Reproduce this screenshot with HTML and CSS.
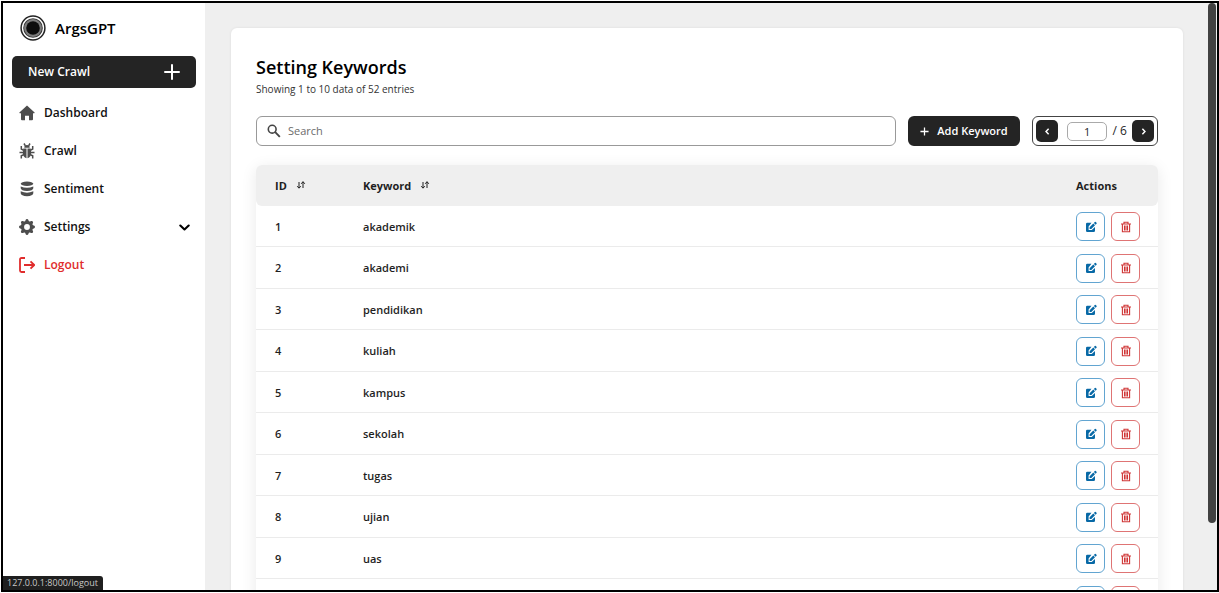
FILE: index.html
```
<!DOCTYPE html>
<html lang="en">
<head>
<meta charset="utf-8">
<meta name="viewport" content="width=device-width, initial-scale=1">
<title>ArgsGPT - Setting Keywords</title>
<link rel="stylesheet" href="styles.css">
</head>
<body>
<svg class="sprite" aria-hidden="true">
  <symbol id="sort" viewBox="0 0 10 10"><path d="M3 2v6M1.200 6.200 3 8.200l1.800-2M7 8V1.800M5.200 3.800 7 1.700l1.800 2.100" fill="none" stroke="currentColor" stroke-width="1"/></symbol>
  <symbol id="edit" viewBox="0 0 12 12"><path d="M6.500 1.800H2.300A1.300 1.300 0 0 0 1 3.100v6.600A1.300 1.300 0 0 0 2.300 11h6.400A1.300 1.300 0 0 0 10 9.700V6L6.800 9H3.600V5.600z" fill="currentColor"/><path d="M4.600 8V6.300L8.300 2.600 10 4.300 6.300 8zM8.900 2l.9-.9a.7.7 0 0 1 1 0l.7.7a.7.7 0 0 1 0 1l-.9.9z" fill="currentColor"/></symbol>
  <symbol id="trash" viewBox="0 0 12 12"><path d="M1 3h10M4 2.800V1.200h4v1.600M2.400 3.200v7.600h7.200V3.200M4.500 4.600v4.800M6 4.600v4.800M7.500 4.600v4.800" fill="none" stroke="currentColor" stroke-width="1.100"/></symbol>
</svg>
<div class="screen">
  <aside class="sidebar">
    <div class="brand">
      <svg class="logo" viewBox="0 0 26 26" aria-hidden="true"><circle cx="13" cy="13" r="11.900" fill="#fff" stroke="#222" stroke-width="1.500"/><circle cx="13" cy="13" r="9.800" fill="#333"/><circle cx="13" cy="13" r="8.900" fill="#7c7c7c"/><circle cx="13" cy="13" r="6.800" fill="#0d0d0d"/></svg>
      <span>ArgsGPT</span>
    </div>
    <button class="new-crawl" type="button">New Crawl
      <svg class="plus" viewBox="0 0 16 16" aria-hidden="true"><path d="M8 1v14M1 8h14" fill="none" stroke="currentColor" stroke-width="2" stroke-linecap="round"/></svg>
    </button>
    <nav class="menu">
      <a href="#dashboard"><svg viewBox="0 0 16 16" aria-hidden="true"><path d="M8 .6.400 7.500q-.4.700.5.800H2v6q0 1 1 1h3v-4.600h4v4.600h3q1 0 1-1v-6h1.100q.9-.1.500-.8z" fill="currentColor"/></svg>Dashboard</a>
      <a href="#crawl"><svg viewBox="0 0 16 16" aria-hidden="true"><path d="M5.300 4.800a2.700 2.700 0 0 1 5.400 0zM4.300 5.500h3.200v9.700Q3.800 14 3.800 10zM8.500 5.500h3.200l.5 4.500q0 4-3.700 5.200z" fill="currentColor"/><path d="M6.400 2.800 5 .5M9.600 2.800 11 .5M4.600 7.300 2.300 6V3M11.400 7.300 13.700 6V3M4.200 9.600H.5M11.800 9.600h3.700M4.600 11.700l-2.300 1V15.500M11.400 11.700l2.300 1V15.500" fill="none" stroke="currentColor" stroke-width="1.500"/></svg>Crawl</a>
      <a href="#sentiment"><svg viewBox="0 0 16 16" aria-hidden="true"><ellipse cx="8" cy="2.800" rx="6.300" ry="2.200" fill="currentColor"/><path d="M1.700 5.400Q8 8.200 14.300 5.400v1.800Q14 9.700 8 9.900 2 9.700 1.700 7.200zM1.700 10.300Q8 13.100 14.300 10.300v2Q14 15 8 15.200 2 15 1.700 12.300z" fill="currentColor"/></svg>Sentiment</a>
      <a href="#settings"><svg viewBox="0 0 16 16" aria-hidden="true"><path fill="currentColor" d="M9.405 1.050c-.413-1.400-2.397-1.400-2.810 0l-.1.340a1.464 1.464 0 0 1-2.105.872l-.310-.170c-1.283-.698-2.686.705-1.987 1.987l.169.311c.446.820.023 1.841-.872 2.105l-.340.100c-1.400.413-1.400 2.397 0 2.810l.340.100a1.464 1.464 0 0 1 .872 2.105l-.170.310c-.698 1.283.705 2.686 1.987 1.987l.311-.169a1.464 1.464 0 0 1 2.105.872l.100.340c.413 1.400 2.397 1.400 2.810 0l.100-.340a1.464 1.464 0 0 1 2.105-.872l.310.170c1.283.698 2.686-.705 1.987-1.987l-.169-.311a1.464 1.464 0 0 1 .872-2.105l.340-.100c1.400-.413 1.400-2.397 0-2.810l-.340-.100a1.464 1.464 0 0 1-.872-2.105l.170-.310c.698-1.283-.705-2.686-1.987-1.987l-.311.169a1.464 1.464 0 0 1-2.105-.872zM8 10.930a2.929 2.929 0 1 1 0-5.860 2.929 2.929 0 0 1 0 5.860z"/></svg>Settings
        <svg class="chevron" viewBox="0 0 10 10" aria-hidden="true"><path d="m1.200 3.200 3.800 3.600 3.800-3.600" fill="none" stroke="currentColor" stroke-width="1.900" stroke-linecap="round" stroke-linejoin="round"/></svg></a>
      <a class="logout" href="#logout"><svg viewBox="0 0 16 16" aria-hidden="true"><path d="M6 1H2.500Q1 1 1 2.500v11Q1 15 2.500 15H6M5 8h10M11.500 4.300 15.200 8l-3.700 3.700" fill="none" stroke="currentColor" stroke-width="1.800" stroke-linejoin="round"/></svg>Logout</a>
    </nav>
  </aside>
  <main class="content">
    <section class="card">
      <h1>Setting Keywords</h1>
      <p class="summary">Showing 1 to 10 data of 52 entries</p>
      <div class="toolbar">
        <label class="search">
          <svg viewBox="0 0 14 14" aria-hidden="true"><circle cx="5.200" cy="5.200" r="3.900" fill="none" stroke="currentColor" stroke-width="1.600"/><path d="m8.200 8.200 4.600 4.600" stroke="currentColor" stroke-width="1.900"/></svg>
          <input type="search" placeholder="Search" aria-label="Search">
        </label>
        <button class="add" type="button"><svg viewBox="0 0 10 10" aria-hidden="true"><path d="M5 .5v9M.5 5h9" stroke="currentColor" stroke-width="1.400"/></svg>Add Keyword</button>
        <div class="pager">
          <button type="button" aria-label="Previous page"><svg viewBox="0 0 8 8" aria-hidden="true"><path d="M5 1.600 2.700 4 5 6.400" fill="none" stroke="currentColor" stroke-width="1.300"/></svg></button>
          <input type="text" value="1" aria-label="Page">
          <span>/ 6</span>
          <button type="button" aria-label="Next page"><svg viewBox="0 0 8 8" aria-hidden="true"><path d="M3 1.600 5.300 4 3 6.400" fill="none" stroke="currentColor" stroke-width="1.300"/></svg></button>
        </div>
      </div>
      <table class="keywords">
        <thead><tr><th class="id">ID<svg class="sort"><use href="#sort"/></svg></th><th>Keyword<svg class="sort"><use href="#sort"/></svg></th><th class="actions">Actions</th></tr></thead>
        <tbody id="rows"></tbody>
      </table>
    </section>
  </main>
  <div class="scroll-thumb"></div>
  <div class="status">127.0.0.1:8000/logout</div>
</div>
<script src="script.js"></script>
</body>
</html>
```
FILE: styles.css
```
* { box-sizing: border-box; }
body {
  margin: 0;
  padding: 1px 0 1px 1px;
  height: 100vh;
  overflow: hidden;
  background: #fff;
  color: #1f1f1f;
  font: 600 12px/16px "Open Sans", "Noto Sans", sans-serif;
}
button, input { font: inherit; color: inherit; }
button { cursor: pointer; }
svg { flex: none; }
.sprite { position: absolute; width: 0; height: 0; }
.screen {
  position: relative;
  display: flex;
  height: 100%;
  overflow: hidden;
  border: 2px solid #000;
  background: #efefef;
}
.sidebar { flex: none; width: 202px; padding: 11px 9px; background: #fff; }
.brand {
  display: flex;
  align-items: center;
  gap: 9px;
  height: 28px;
  padding-left: 8px;
  color: #000;
  font-size: 15px;
}
.logo { width: 26px; height: 26px; }
.new-crawl {
  display: flex;
  align-items: center;
  justify-content: space-between;
  width: 100%;
  height: 32px;
  margin: 14px 0 6px;
  padding: 0 16px;
  border: 0;
  border-radius: 5px;
  background: #242424;
  color: #fff;
}
.plus { width: 16px; height: 16px; }
.menu a {
  display: flex;
  align-items: center;
  gap: 9px;
  height: 38px;
  padding: 0 6px 0 7px;
  color: #111;
  font-size: 12px;
  text-decoration: none;
}
.menu svg { width: 16px; height: 16px; color: #4d4d4d; }
.menu .chevron { width: 11px; height: 11px; margin-left: auto; color: #000; }
.menu .logout, .menu .logout svg { color: #e02c2c; }
.content { flex: 1; min-width: 0; padding: 25px 34px 25px 26px; }
.card {
  padding: 25px 25px 30px;
  border-radius: 6px;
  background: #fff;
  box-shadow: 0 0 3px rgba(0, 0, 0, .08);
}
h1 { margin: 0; color: #000; font-size: 18px; line-height: 28px; font-weight: 600; }
.summary { margin: 0; color: #333; font-size: 10px; font-weight: 400; }
.toolbar { display: flex; gap: 12px; height: 30px; margin: 19px 0; }
.search {
  display: flex;
  flex: 1;
  align-items: center;
  gap: 7px;
  padding: 0 10px;
  border: 1px solid #999;
  border-radius: 6px;
  font-size: 11px;
  font-weight: 400;
}
.search svg { width: 14px; height: 14px; color: #444; }
.search input { flex: 1; min-width: 0; padding: 0; border: 0; outline: 0; background: none; }
.search input::placeholder { color: #6b6b6b; opacity: 1; }
.add {
  display: flex;
  align-items: center;
  justify-content: center;
  gap: 8px;
  width: 112px;
  padding: 0;
  border: 0;
  border-radius: 6px;
  background: #242424;
  color: #fff;
  font-size: 11px;
  white-space: nowrap;
}
.add svg { width: 9px; height: 9px; }
.pager {
  display: flex;
  align-items: center;
  justify-content: space-between;
  width: 126px;
  padding: 0 3px;
  border: 1px solid #444;
  border-radius: 6px;
  font-weight: 400;
}
.pager button {
  display: grid;
  place-items: center;
  width: 22px;
  height: 22px;
  padding: 0;
  border: 0;
  border-radius: 5px;
  background: #242424;
  color: #fff;
}
.pager button svg { width: 9px; height: 9px; }
.pager input {
  width: 40px;
  height: 19px;
  margin-left: 4px;
  padding: 0;
  border: 1px solid #aaa;
  border-radius: 5px;
  background: #fff;
  font-size: 11px;
  text-align: center;
}
.keywords {
  width: 100%;
  border-collapse: separate;
  border-spacing: 0;
  border-radius: 6px;
  box-shadow: 0 3px 16px rgba(0, 0, 0, .09);
  font-size: 11px;
}
.keywords th, .keywords td { padding: 0 0 0 19px; text-align: left; }
.keywords th { height: 41px; background: #efefef; font-weight: 700; }
.keywords th:first-child { border-radius: 6px 0 0 6px; }
.keywords th:last-child { border-radius: 0 6px 6px 0; }
.keywords td { height: 41px; padding-top: 1px; border-bottom: 1px solid #ebebeb; }
.keywords tr:nth-child(even) td { height: 42px; }
.keywords .id { width: 88px; }
.keywords .actions { width: 101px; }
.sort { width: 10px; height: 10px; margin-left: 9px; }
.buttons { display: flex; gap: 6px; }
.buttons button {
  display: grid;
  place-items: center;
  width: 29px;
  height: 29px;
  padding: 0;
  border: 1px solid #62a5d1;
  border-radius: 6px;
  background: #fff;
  color: #0869a6;
}
.buttons .delete { border-color: #df7474; color: #cf3535; }
.buttons svg { width: 12px; height: 12px; }
.scroll-thumb {
  position: absolute;
  top: 0;
  right: 1px;
  width: 8px;
  height: 520px;
  border-radius: 4px;
  background: #414141;
}
.status {
  position: absolute;
  bottom: 0;
  left: 0;
  padding: 0 5px 0 4px;
  border-radius: 0 3px 0 0;
  background: #1f1f1f;
  color: #c8c8c8;
  font-size: 9px;
  line-height: 14px;
  font-weight: 400;
}
```
FILE: script.js
```
const words = ["akademik", "akademi", "pendidikan", "kuliah", "kampus", "sekolah", "tugas", "ujian", "uas", "uts"];
document.getElementById("rows").innerHTML = words.map((word, i) => `
  <tr>
    <td>${i + 1}</td>
    <td>${word}</td>
    <td><div class="buttons">
      <button type="button" aria-label="Edit ${word}"><svg><use href="#edit"/></svg></button>
      <button class="delete" type="button" aria-label="Delete ${word}"><svg><use href="#trash"/></svg></button>
    </div></td>
  </tr>`).join("");
```
